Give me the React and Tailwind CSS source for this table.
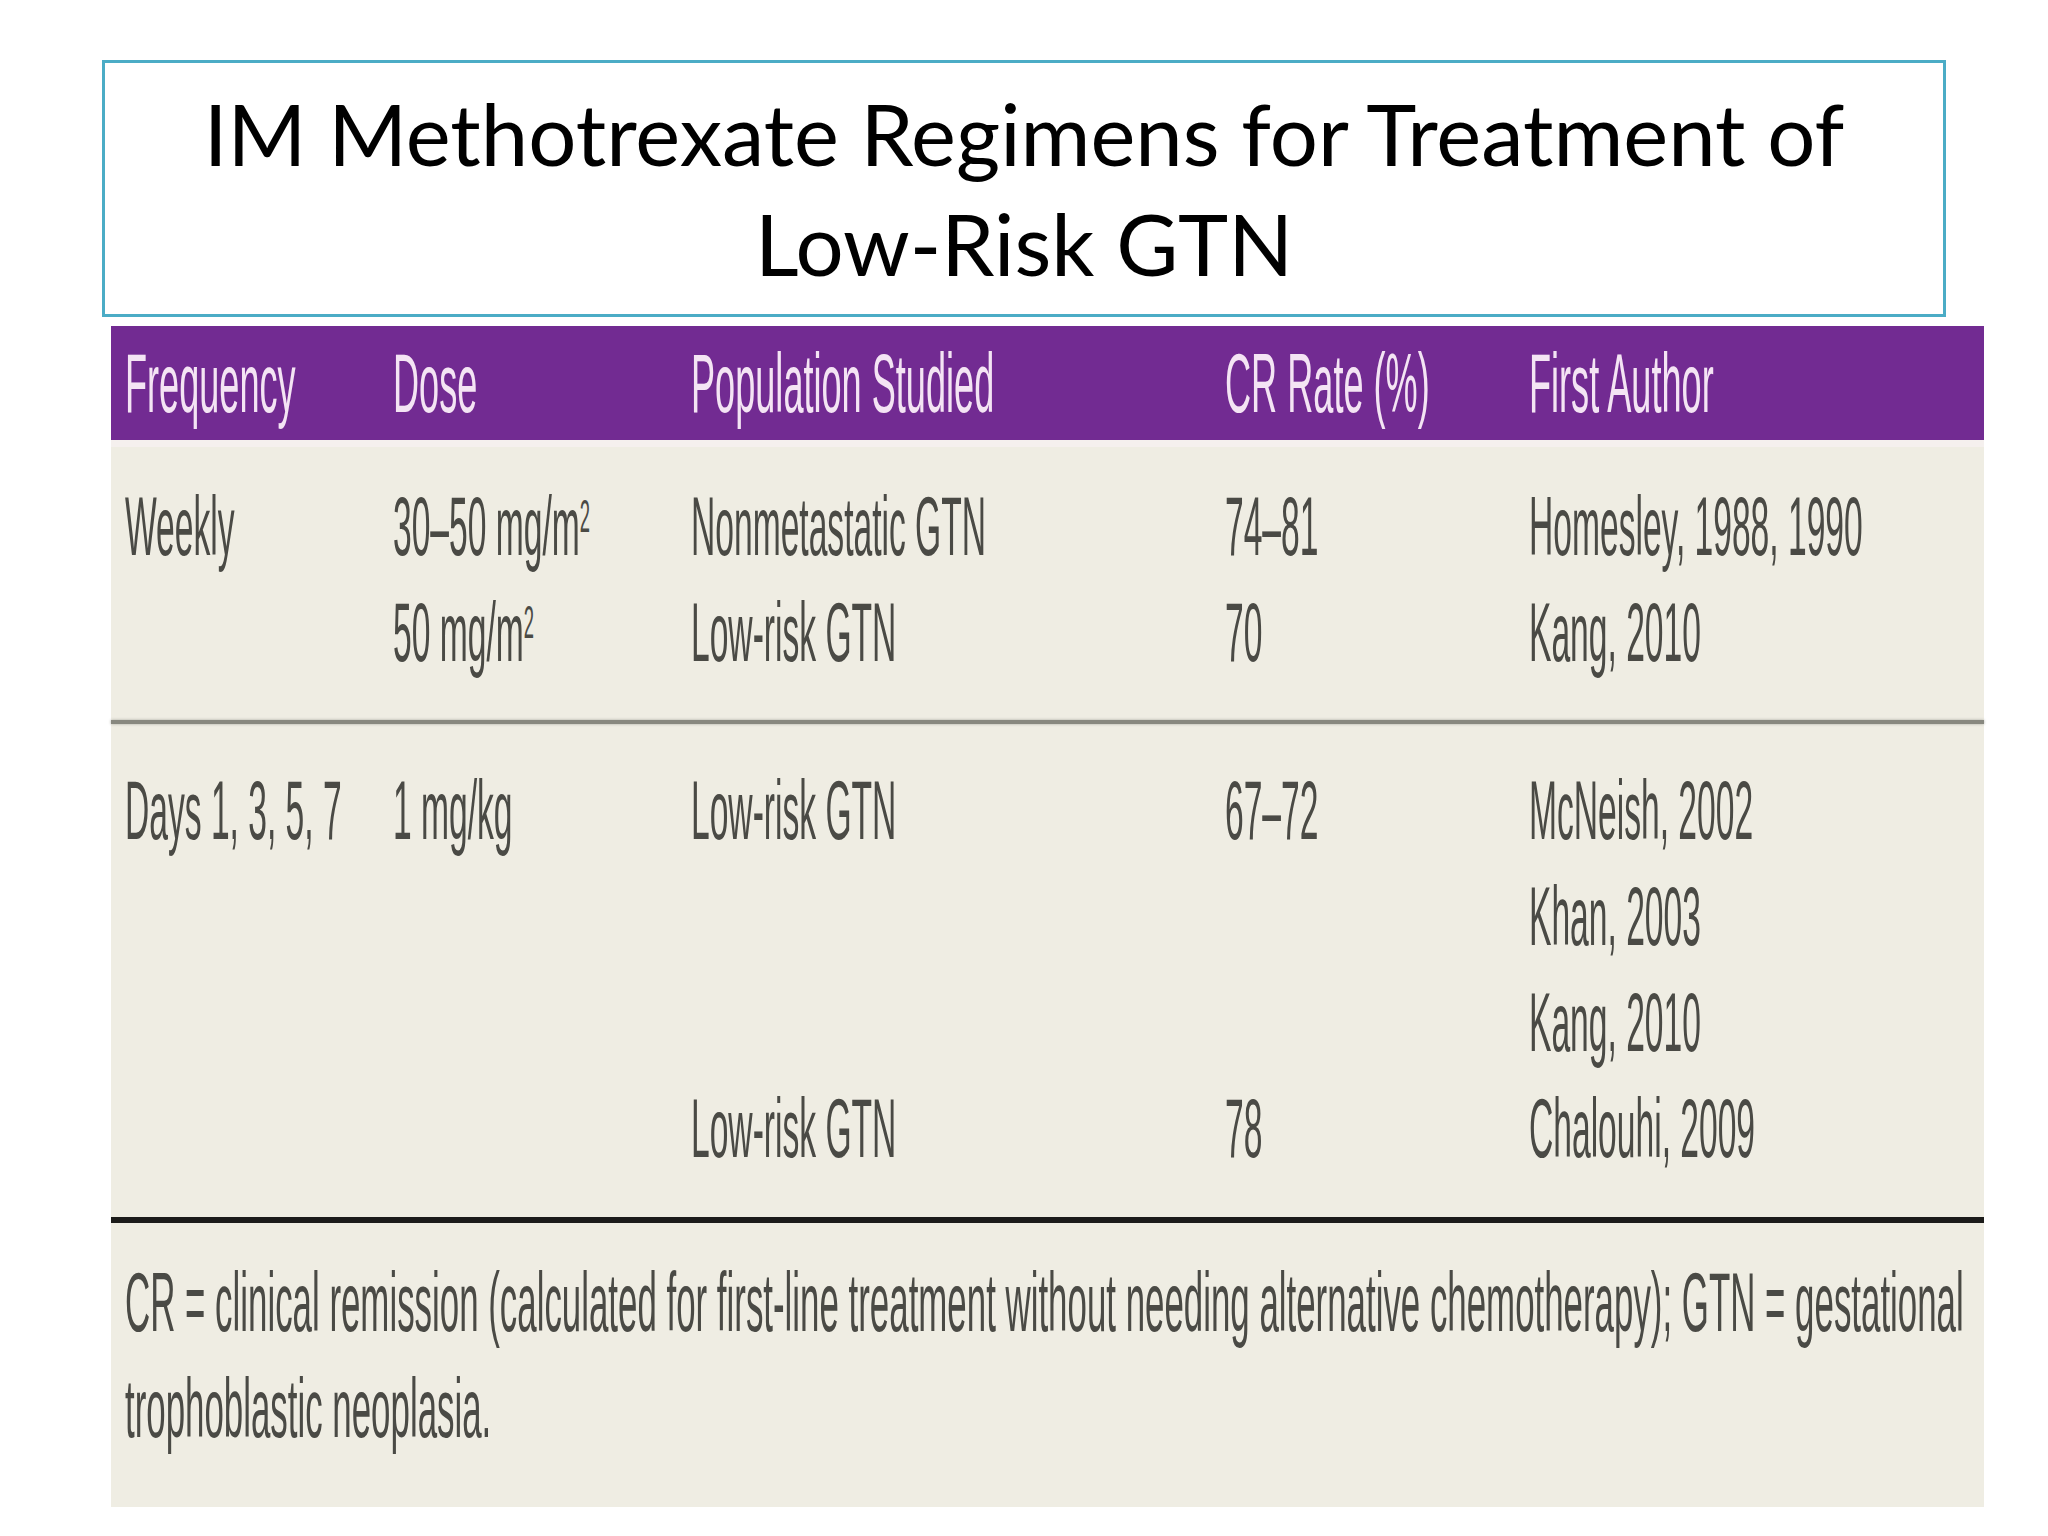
const narrow = "inline-block origin-left whitespace-nowrap scale-x-[0.4]";

const cols = "grid grid-cols-[268px_298px_534px_304px_1fr] pl-[14px]";

function M2({ n }) {
  return (
    <>
      {n} mg/m<sup className="text-[46px] leading-none">2</sup>
    </>
  );
}

const weekly = [
  ["Weekly", <M2 n="30–50" />, "Nonmetastatic GTN", "74–81", "Homesley, 1988, 1990"],
  ["", <M2 n="50" />, "Low-risk GTN", "70", "Kang, 2010"],
];

const days = [
  ["Days 1, 3, 5, 7", "1 mg/kg", "Low-risk GTN", "67–72", "McNeish, 2002"],
  ["", "", "", "", "Khan, 2003"],
  ["", "", "", "", "Kang, 2010"],
  ["", "", "Low-risk GTN", "78", "Chalouhi, 2009"],
];

function Rows({ rows }) {
  return rows.map((r, i) => (
    <div key={i} className={cols}>
      {r.map((c, j) => (
        <div key={j} className="h-[106px]">
          {c !== "" && <span className={narrow}>{c}</span>}
        </div>
      ))}
    </div>
  ));
}

export default function App() {
  return (
    <div className="w-[2048px] h-[1536px] bg-white overflow-hidden">
      <div className="pt-[60px] pl-[102px]">
        <div className="w-[1844px] h-[257px] border-[3px] border-[#4bacc6] pt-[15px] text-center font-['Lato',sans-serif] text-[85px] leading-[110px] text-black">
          IM Methotrexate Regimens for Treatment of
          <br />
          Low-Risk GTN
        </div>
      </div>

      <div className="ml-[111px] mt-[9px] w-[1873px] bg-[#efede3] font-['Liberation_Sans',sans-serif] text-[84px] leading-[106px] text-[#4a4a45]">
        <div className={`${cols} h-[114px] items-center bg-[#722b92] text-[#f4e4f4]`}>
          {["Frequency", "Dose", "Population Studied", "CR Rate (%)", "First Author"].map((h) => (
            <div key={h}>
              <span className="inline-block origin-left whitespace-nowrap scale-x-[0.43]">{h}</span>
            </div>
          ))}
        </div>

        <div className="border-t-[7px] border-[#f5f0ee] pt-[26px] pb-[35px]">
          <Rows rows={weekly} />
        </div>

        <div className="h-[4px] bg-[#88887f] shadow-[0_0_3px_#a8a89f]" />

        <div className="pt-[33px] pb-[36px]">
          <Rows rows={days} />
        </div>

        <div className="h-[6px] bg-[#1c1c1a]" />

        <div className="pl-[14px] pt-[26px] pb-[46px]">
          <div className="h-[106px]">
            <span className="inline-block origin-left whitespace-nowrap scale-x-[0.415]">
              CR = clinical remission (calculated for first-line treatment without needing alternative chemotherapy); GTN = gestational
            </span>
          </div>
          <div className="h-[106px]">
            <span className="inline-block origin-left whitespace-nowrap scale-x-[0.415]">trophoblastic neoplasia.</span>
          </div>
        </div>
      </div>
    </div>
  );
}
